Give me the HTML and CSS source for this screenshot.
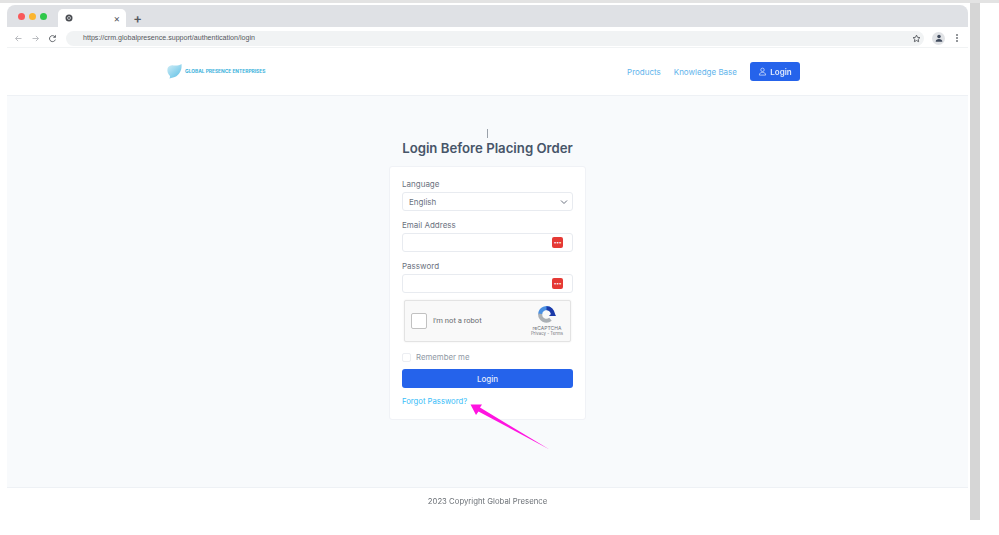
FILE: index.html
```html
<!DOCTYPE html>
<html lang="en">
<head>
    <meta charset="UTF-8">
    <meta name="viewport" content="width=device-width, initial-scale=1.0">
    <title>Login</title>
    <link rel="stylesheet" href="styles.css">
</head>
<body>
<div class="shot">
    <div class="window">
        <!-- browser tabs -->
        <div class="tabbar">
            <div class="lights">
                <span class="light light-red"></span>
                <span class="light light-yellow"></span>
                <span class="light light-green"></span>
            </div>
            <div class="tab">
                <svg class="tab-icon" viewBox="0 0 16 16"><circle cx="8" cy="8" r="7" fill="#4a4d52"/><circle cx="8" cy="8" r="3" fill="none" stroke="#d5d7da" stroke-width="1.6"/></svg>
                <span class="tab-close">×</span>
            </div>
            <span class="tab-new">+</span>
        </div>

        <!-- browser toolbar -->
        <div class="toolbar">
            <svg class="tool-icon" viewBox="0 0 12 12"><path d="M10 6H2M5.5 2.5 2 6l3.5 3.5" fill="none" stroke="#b4b7bb" stroke-width="1.2"/></svg>
            <svg class="tool-icon" viewBox="0 0 12 12"><path d="M2 6h8M6.500 2.500 10 6 6.500 9.500" fill="none" stroke="#b4b7bb" stroke-width="1.2"/></svg>
            <svg class="tool-icon" viewBox="0 0 12 12"><path d="M9.800 7.500A4 4 0 1 1 9 3.500" fill="none" stroke="#5f6368" stroke-width="1.3"/><path d="M10.500 1v4h-4z" fill="#5f6368"/></svg>
            <div class="omnibox">
                <span class="url">https://crm.globalpresence.support/authentication/login</span>
                <svg class="star" viewBox="0 0 24 24"><path d="m12 3 2.800 5.900 6.400.8-4.700 4.400 1.200 6.400L12 17.400l-5.700 3.100 1.200-6.400-4.700-4.400 6.400-.8z" fill="none" stroke="#55585d" stroke-width="2.400"/></svg>
            </div>
            <span class="avatar">
                <svg viewBox="0 0 12 12"><circle cx="6" cy="4.200" r="2.100" fill="#3f4a5c"/><path d="M2 10.500c0-2.400 1.800-3.400 4-3.400s4 1 4 3.400z" fill="#3f4a5c"/></svg>
            </span>
            <span class="kebab"><i></i><i></i><i></i></span>
        </div>

        <!-- site nav -->
        <header class="site-nav">
            <a class="logo">
                <svg class="logo-mark" viewBox="0 0 16 16">
                    <defs>
                        <linearGradient id="logo-fill" x1="0" y1="0" x2="0.800" y2="1">
                            <stop offset="0" stop-color="#d3eef7"/>
                            <stop offset="1" stop-color="#63c2e6"/>
                        </linearGradient>
                    </defs>
                    <path d="M.500 5C1 2.500 4 1 7 1.500c3 .4 6 0 8.500-1.500.5 5-1 10-5.500 13-2 1.300-5 1.500-7.500 2.500.6-1 1-2 .5-3C1 10.500 0 8 .500 5z" fill="url(#logo-fill)"/>
                </svg>
                <span class="logo-text">GLOBAL PRESENCE ENTERPRISES</span>
            </a>
            <nav class="nav-links">
                <a>Products</a>
                <a>Knowledge Base</a>
                <button class="nav-login">
                    <svg viewBox="0 0 12 12"><circle cx="6" cy="3.800" r="2.300" fill="none" stroke="#d6e2fb" stroke-width="1"/><path d="M1.800 10.800c0-2.600 1.800-3.600 4.200-3.600s4.200 1 4.200 3.600z" fill="none" stroke="#d6e2fb" stroke-width="1"/></svg>
                    Login
                </button>
            </nav>
        </header>

        <!-- login -->
        <main class="content">
            <div class="caret"></div>
            <h1 class="title">Login Before Placing Order</h1>
            <form class="card">
                <label class="field-label">Language</label>
                <div class="input select">
                    English
                    <svg viewBox="0 0 10 10"><path d="m2 3.500 3 3 3-3" fill="none" stroke="#6b7280" stroke-width="1"/></svg>
                </div>
                <label class="field-label">Email Address</label>
                <div class="input"><span class="dots">•••</span></div>
                <label class="field-label">Password</label>
                <div class="input"><span class="dots">•••</span></div>

                <div class="captcha">
                    <span class="captcha-box"></span>
                    <span class="captcha-text">I'm not a robot</span>
                    <div class="captcha-brand">
                        <svg viewBox="0 0 24 24">
                            <path d="M4 12a8 8 0 0 1 13.500-5.800" fill="none" stroke="#4a90e2" stroke-width="5"/>
                            <path d="M12 4a8 8 0 0 1 8 8" fill="none" stroke="#1c3aa9" stroke-width="5"/>
                            <path d="M24 14h-9l3-3 3-3z" fill="#1c3aa9"/>
                            <path d="M4 11a8 8 0 0 0 13 7" fill="none" stroke="#abb0b5" stroke-width="5"/>
                        </svg>
                        <span class="captcha-name">reCAPTCHA</span>
                        <span class="captcha-links">Privacy - Terms</span>
                    </div>
                </div>

                <div class="remember">
                    <span class="remember-box"></span>
                    Remember me
                </div>
                <button class="submit" type="button">Login</button>
                <a class="forgot">Forgot Password?</a>
            </form>
        </main>

        <footer class="site-footer">2023 Copyright Global Presence</footer>
    </div>
    <div class="scrollbar"></div>
</div>

<!-- annotation arrow over the page -->
<svg class="arrow" viewBox="0 0 999 535">
    <path d="M470.500 404.500 482 404.500 480 407.500 549.500 449.500 478.500 411.500 476 415z" fill="#ff14e0"/>
</svg>
</body>
</html>
```
FILE: styles.css
```css
* {
    box-sizing: border-box;
}

body {
    margin: 0;
    background-color: #fff;
    font-family: Inter, "Liberation Sans", sans-serif;
    overflow: hidden;
    border-top: 3px solid #e3e3e3;
    height: 535px;
}

.shot {
    display: flex;
    padding-left: 7px;
    filter: blur(0.6px);
}

.window {
    width: 961px;
    padding-top: 2px;
}

.scrollbar {
    width: 10px;
    height: 517px;
    margin-left: 2px;
    background-color: #d6d6d6;
}

/* browser chrome */
.tabbar {
    height: 22px;
    background-color: #dfe1e5;
    border-radius: 8px 8px 0 0;
    display: flex;
    align-items: flex-end;
}

.lights {
    display: flex;
    gap: 4px;
    padding-left: 11px;
    width: 51px;
    height: 22px;
    align-items: center;
}

.light {
    width: 7px;
    height: 7px;
    flex: none;
    border-radius: 50%;
}

.light-red {
    background-color: #f9595a;
}

.light-yellow {
    background-color: #fbb52f;
}

.light-green {
    background-color: #2fc84a;
}

.tab {
    width: 68px;
    height: 18px;
    background-color: #fff;
    border-radius: 5px 5px 0 0;
    display: flex;
    align-items: center;
    justify-content: space-between;
    padding: 0 6px 0 7px;
}

.tab-icon {
    width: 8px;
    height: 8px;
}

.tab-close {
    font-size: 10px;
    color: #55585d;
}

.tab-new {
    width: 23px;
    height: 18px;
    text-align: center;
    font-size: 13px;
    line-height: 18px;
    font-weight: 600;
    color: #55585d;
}

.toolbar {
    height: 21px;
    display: flex;
    align-items: center;
    gap: 8px;
    padding: 2px 8px 0 7px;
    background-color: #fff;
    border-bottom: 1px solid #f1f3f4;
}

.tool-icon {
    width: 9px;
    height: 9px;
    flex: none;
}

.omnibox {
    width: 858px;
    height: 15px;
    margin-left: 1px;
    background-color: #f1f3f4;
    border-radius: 8px;
    display: flex;
    align-items: center;
    justify-content: space-between;
    padding: 0 3px 0 17px;
}

.url {
    font-family: "Liberation Sans", sans-serif;
    font-size: 7.100px;
    color: #55585d;
}

.star {
    width: 9px;
    height: 9px;
}

.avatar {
    width: 13px;
    height: 13px;
    background-color: #e1e3e6;
    border-radius: 50%;
    display: flex;
    align-items: center;
    justify-content: center;
    flex: none;
}

.avatar svg {
    width: 10px;
    height: 10px;
}

.kebab {
    display: flex;
    flex-direction: column;
    gap: 1px;
    margin-left: 3px;
}

.kebab i {
    width: 2px;
    height: 2px;
    border-radius: 50%;
    background-color: #70747a;
}

/* site nav */
.site-nav {
    height: 48px;
    background-color: #fff;
    border-bottom: 1px solid #eef1f5;
    display: flex;
    align-items: center;
    justify-content: space-between;
    padding: 0 168px 0 160px;
}

.logo {
    display: flex;
    align-items: center;
    gap: 3px;
}

.logo-mark {
    width: 15px;
    height: 15px;
}

.logo-text {
    font-size: 4.850px;
    font-weight: 700;
    color: #3cb2dc;
    white-space: nowrap;
    margin-bottom: 2px;
}

.nav-links {
    display: flex;
    align-items: center;
    gap: 13px;
    font-size: 8px;
    color: #5fb4ec;
}

.nav-links a:first-child {
    margin-right: 0;
}

.nav-login {
    width: 50px;
    height: 19px;
    border: 0;
    border-radius: 3px;
    background-color: #2563eb;
    color: #e4ecfd;
    font-family: inherit;
    font-size: 8px;
    font-weight: 600;
    display: flex;
    align-items: center;
    justify-content: center;
    gap: 3px;
    padding: 0;
}

.nav-login svg {
    width: 9px;
    height: 9px;
}

/* login */
.content {
    height: 391px;
    background-color: #f8fafc;
    position: relative;
    padding-top: 43px;
    display: flex;
    flex-direction: column;
    align-items: center;
}

.caret {
    position: absolute;
    top: 33px;
    left: 480px;
    width: 1px;
    height: 9px;
    background-color: #9aa1aa;
}

.title {
    margin: 0 0 9px;
    font-size: 13.200px;
    line-height: 18px;
    font-weight: 600;
    color: #475569;
}

.card {
    width: 197px;
    height: 254px;
    background-color: #fff;
    border: 1px solid #f0f2f6;
    border-radius: 3px;
    padding: 12px 12px 0;
    display: flex;
    flex-direction: column;
}

.field-label {
    height: 13px;
    font-size: 8px;
    line-height: 10px;
    color: #6b7280;
}

.input {
    height: 19px;
    margin-bottom: 9px;
    background-color: #fff;
    border: 1px solid #e8ebf0;
    border-radius: 3px;
    display: flex;
    align-items: center;
    justify-content: flex-end;
    padding: 0 9px 0 6px;
}

.select {
    justify-content: space-between;
    padding-right: 3px;
    font-size: 8px;
    color: #6b7280;
}

.select svg {
    width: 10px;
    height: 10px;
}

.dots {
    width: 11px;
    height: 11px;
    background-color: #e53935;
    border-radius: 2px;
    font-size: 5px;
    line-height: 11px;
    letter-spacing: -0.3px;
    text-align: center;
    color: #fff;
}

.captcha {
    width: 167px;
    height: 42px;
    margin: -2px 0 0 2px;
    background-color: #f9f9f9;
    border: 1px solid #e3e3e3;
    border-radius: 2px;
    box-shadow: 0 0 2px rgba(0, 0, 0, 0.08);
    display: flex;
    align-items: center;
    padding: 0 7px 0 6px;
}

.captcha-box {
    width: 16px;
    height: 16px;
    background-color: #fff;
    border: 1px solid #c1c1c1;
    border-radius: 2px;
    flex: none;
}

.captcha-text {
    margin: 0 0 1px 6px;
    font-family: Roboto, "Liberation Sans", sans-serif;
    font-size: 7.600px;
    color: #6a6d72;
    flex: 1;
}

.captcha-brand {
    display: flex;
    flex-direction: column;
    align-items: center;
    color: #70747a;
}

.captcha-brand svg {
    width: 19px;
    height: 19px;
    margin-bottom: 1px;
}

.captcha-name {
    font-size: 5px;
    line-height: 6px;
}

.captcha-links {
    font-size: 4.300px;
    line-height: 6px;
}

.remember {
    margin-top: 9px;
    height: 12px;
    display: flex;
    align-items: center;
    gap: 5px;
    font-size: 7.800px;
    color: #9099a5;
}

.remember-box {
    width: 9px;
    height: 9px;
    background-color: #fff;
    border: 1px solid #eceef2;
    border-radius: 2px;
}

.submit {
    height: 19px;
    margin-top: 6px;
    border: 0;
    border-radius: 3px;
    background-color: #2563eb;
    color: #e4ecfd;
    font-family: inherit;
    font-size: 8px;
    font-weight: 500;
}

.forgot {
    margin-top: 9px;
    font-size: 7.700px;
    line-height: 10px;
    color: #38bdf8;
}

.site-footer {
    height: 34px;
    background-color: #fff;
    border-top: 1px solid #eef1f5;
    padding-top: 8px;
    text-align: center;
    font-size: 7.750px;
    line-height: 10px;
    color: #6b7076;
}

/* arrow drawn on top of the screenshot */
.arrow {
    position: absolute;
    top: 0;
    left: 0;
    width: 999px;
    height: 535px;
}
```
